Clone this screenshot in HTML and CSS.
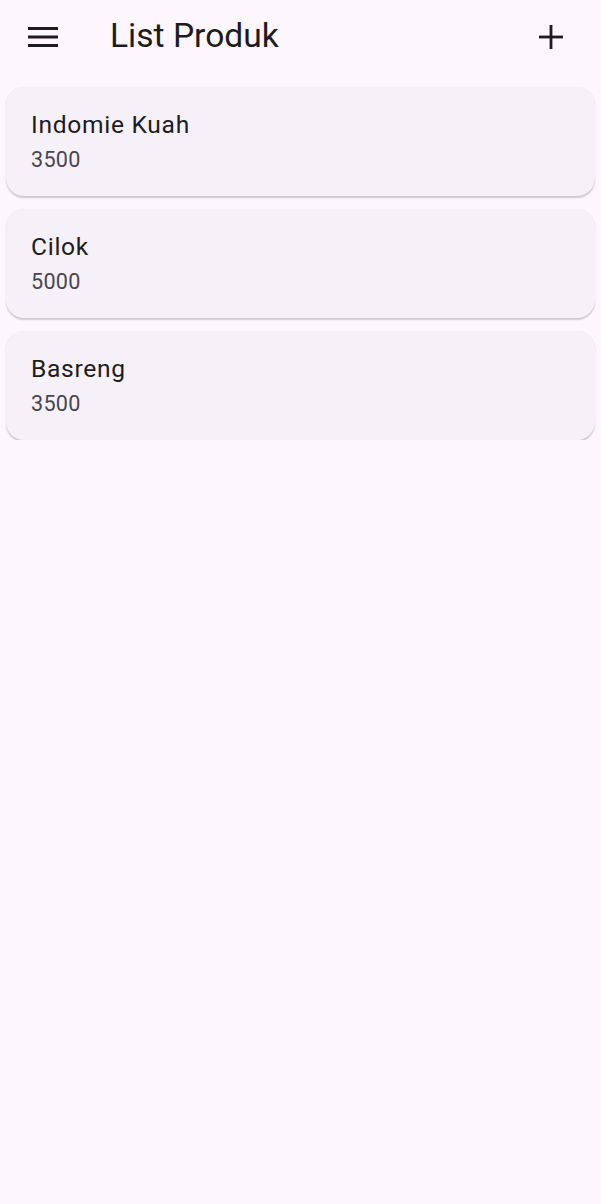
FILE: index.html
```html
<!DOCTYPE html>
<html>
<head>
<meta charset="utf-8">
<link rel="stylesheet" href="styles.css">
</head>
<body>
<header class="appbar">
  <button class="icon-btn menu" aria-label="menu">
    <svg width="30" height="22" viewBox="0 0 30 22"><rect x="0" y="1" width="30" height="3" fill="#1d1b20"/><rect x="0" y="9.5" width="30" height="3" fill="#1d1b20"/><rect x="0" y="18" width="30" height="3" fill="#1d1b20"/></svg>
  </button>
  <h1 class="title">List Produk</h1>
  <button class="icon-btn add" aria-label="tambah">
    <svg width="24" height="24" viewBox="0 0 24 24"><rect x="10.6" y="0" width="2.8" height="24" fill="#1d1b20"/><rect x="0" y="10.6" width="24" height="2.8" fill="#1d1b20"/></svg>
  </button>
</header>
<main class="list">
  <div class="card"><div class="name">Indomie Kuah</div><div class="price">3500</div></div>
  <div class="card"><div class="name">Cilok</div><div class="price">5000</div></div>
  <div class="card"><div class="name">Basreng</div><div class="price">3500</div></div>
</main>
</body>
</html>
```
FILE: styles.css
```css
html, body {
  margin: 0;
  padding: 0;
  background: #fdf7fd;
  font-family: Roboto, "Noto Sans", sans-serif;
  color: #1d1b20;
}
.appbar {
  height: 74px;
  display: flex;
  align-items: center;
}
.icon-btn {
  background: none;
  border: none;
  padding: 0;
  display: flex;
  align-items: center;
  justify-content: center;
}
.menu {
  margin-left: 28px;
  width: 30px;
  height: 22px;
}
.title {
  margin: 0 0 3px 52px;
  font-size: 33.6px;
  line-height: 40px;
  font-weight: 400;
  flex: 1;
  letter-spacing: 0;
}
.add {
  margin-right: 38px;
  width: 24px;
  height: 24px;
}
.list {
  display: flex;
  flex-direction: column;
  gap: 13px;
  padding: 13px 6px 0 6px;
}
.card {
  background: #f6f1f8;
  border-radius: 18px;
  height: 109px;
  box-sizing: border-box;
  padding: 22px 25px 0 25px;
  box-shadow: 0 1.5px 1.5px rgba(0,0,0,0.18), 0 0 1px rgba(0,0,0,0.06);
}
.name {
  font-size: 24.6px;
  letter-spacing: 0.7px;
  line-height: 32px;
  color: #1d1b20;
}
.price {
  font-size: 21.6px;
  line-height: 30px;
  letter-spacing: 0.3px;
  color: #49454f;
  margin-top: 4px;
}
```
